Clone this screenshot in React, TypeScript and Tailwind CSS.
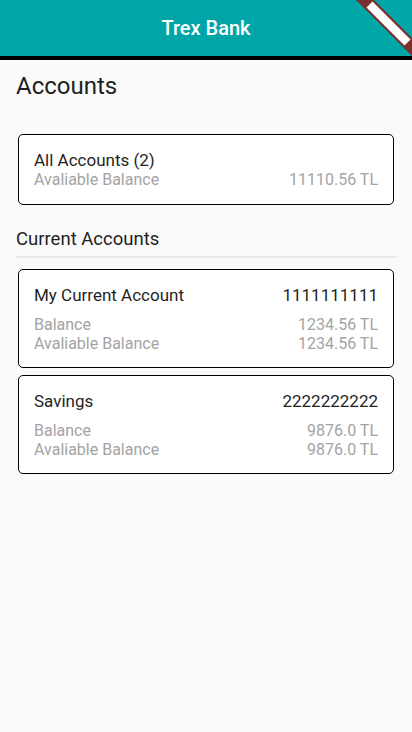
import React from "react";

type Account = {
  name: string;
  number: string;
  balance: string;
  available: string;
};

const accounts: Account[] = [
  { name: "My Current Account", number: "1111111111", balance: "1234.56 TL", available: "1234.56 TL" },
  { name: "Savings", number: "2222222222", balance: "9876.0 TL", available: "9876.0 TL" },
];

function DebugBanner() {
  return (
    <svg className="absolute right-0 top-0" width="56" height="56" viewBox="0 0 56 56">
      <polygon points="0,0 18,0 56,38 56,56" fill="#7b2f2f" />
      <polygon points="10.5,7.5 16.5,1.5 54.5,39.5 48.5,45.5" fill="#ffffff" />
    </svg>
  );
}

function AccountCard({ account }: { account: Account }) {
  return (
    <div className="mx-[2px] rounded-[5px] border border-black bg-white px-[15px] pt-[15px] pb-[14px]">
      <div className="flex justify-between text-[17px] leading-5 text-[#1f1f1f]">
        <span>{account.name}</span>
        <span>{account.number}</span>
      </div>
      <div className="mt-[10px] flex justify-between text-base leading-[19px] text-[#a3a3a3]">
        <span>Balance</span>
        <span>{account.balance}</span>
      </div>
      <div className="flex justify-between text-base leading-[19px] text-[#a3a3a3]">
        <span>Avaliable Balance</span>
        <span>{account.available}</span>
      </div>
    </div>
  );
}

export default function App() {
  return (
    <div className="min-h-[732px] bg-[#fafafa] font-['Roboto',sans-serif]">
      <header className="relative flex h-14 items-center justify-center overflow-hidden bg-[#00a5a7]">
        <h1 className="text-xl font-medium text-white">Trex Bank</h1>
        <DebugBanner />
      </header>
      <div className="h-1 bg-black" />

      <main className="px-4 pt-3">
        <h2 className="text-2xl leading-7 text-[#1f1f1f]">Accounts</h2>

        <div className="mx-[2px] mt-[34px] rounded-[5px] border border-black bg-white px-[15px] pt-[15px] pb-[14px]">
          <p className="text-[17px] leading-5 text-[#1f1f1f]">All Accounts (2)</p>
          <div className="flex justify-between text-base leading-5 text-[#a3a3a3]">
            <span>Avaliable Balance</span>
            <span>11110.56 TL</span>
          </div>
        </div>

        <h3 className="mt-[22px] text-[18.5px] leading-6 text-[#1f1f1f]">Current Accounts</h3>
        <div className="mt-[5px] h-[2px] bg-[#e8e8e8]" />

        <div className="mt-[11px] flex flex-col gap-[7px]">
          {accounts.map((a) => (
            <AccountCard key={a.number} account={a} />
          ))}
        </div>
      </main>
    </div>
  );
}
